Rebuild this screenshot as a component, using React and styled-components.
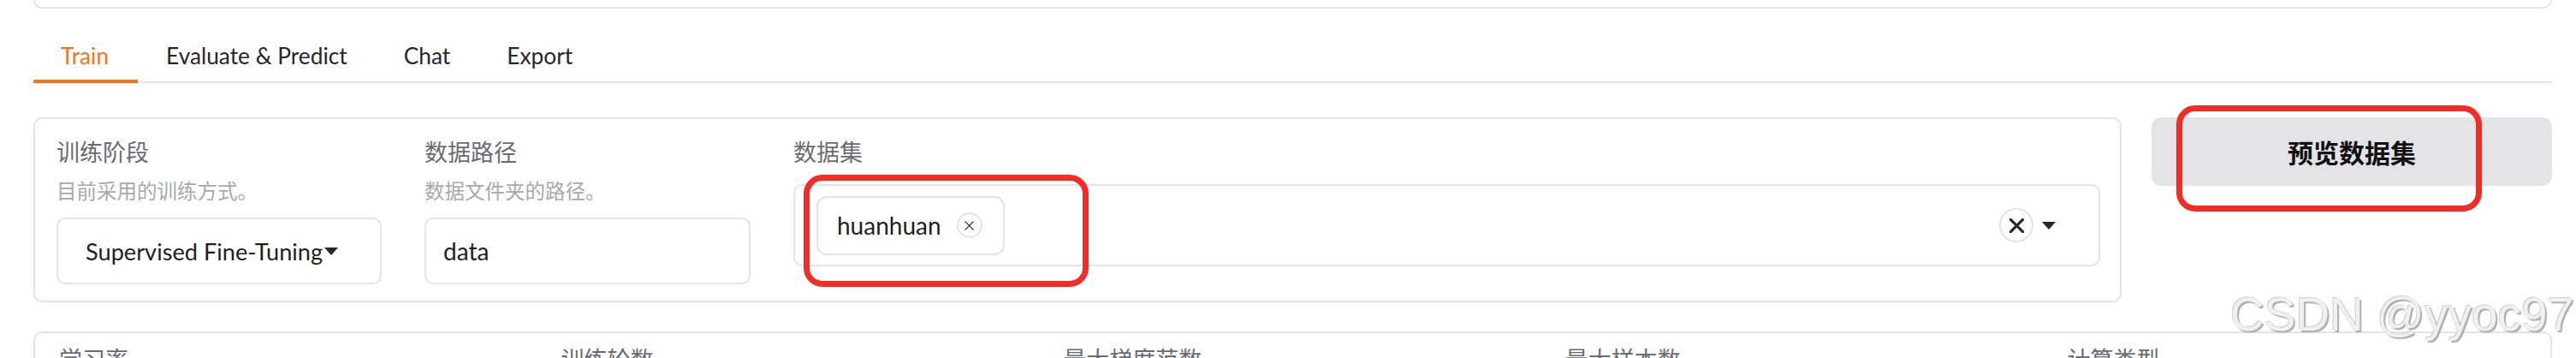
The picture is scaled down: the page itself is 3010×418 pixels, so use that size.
import React from "react";
import styled, { createGlobalStyle } from "styled-components";

const Global = createGlobalStyle`
  html, body { margin: 0; padding: 0; background: #ffffff; }
  body {
    font-family: "Lato", "Noto Sans CJK SC", sans-serif;
    color: #27272a;
  }
  * { box-sizing: border-box; }
`;

const Page = styled.div`
  position: relative;
  padding: 0 28px 0 39px;
  min-height: 700px;
  overflow: hidden;
`;

const TopCard = styled.div`
  height: 10px;
  border: 2px solid #e4e4e7;
  border-top: none;
  border-radius: 0 0 10px 10px;
`;

const TabBar = styled.div`
  margin-top: 25px;
  display: flex;
  border-bottom: 2px solid #e4e4e7;
`;

const Tab = styled.button`
  all: unset;
  padding: 12px ${(p) => (p.$active ? "34px 10px 32px" : "33px 10px")};
  line-height: 36px;
  font-family: "Lato", sans-serif;
  font-size: 26.3px;
  color: ${(p) => (p.$active ? "#f97316" : "#27272a")};
  border-bottom: 4px solid ${(p) => (p.$active ? "#f97316" : "transparent")};
  margin-bottom: -2px;
  cursor: pointer;
`;

const MainRow = styled.div`
  margin-top: 40px;
  display: flex;
  gap: 35px;
  align-items: flex-start;
`;

const Card = styled.div`
  flex: ${(p) => p.$flex || "0 0 2440px"};
  border: 2px solid #e4e4e7;
  border-radius: 10px;
  padding: ${(p) => p.$pad || "20px 23px 19px 25px"};
  display: ${(p) => (p.$grid ? "grid" : "flex")};
  grid-template-columns: repeat(5, 1fr);
  gap: 50px;
  align-items: flex-start;
`;

const Field = styled.div`
  flex: ${(p) => p.$flex || "0 0 auto"};
  width: ${(p) => (p.$w ? `${p.$w}px` : "auto")};
  display: flex;
  flex-direction: column;
`;

const Label = styled.div`
  font-family: "Noto Sans CJK SC", sans-serif;
  font-size: 27px;
  line-height: 36px;
  color: #6b6b73;
`;

const Hint = styled.div`
  margin-top: 12px;
  font-family: "Noto Sans CJK SC", sans-serif;
  font-size: 23.5px;
  line-height: 30px;
  color: #a8a8b0;
`;

const Box = styled.div`
  margin-top: ${(p) => p.$mt || 17}px;
  height: ${(p) => p.$h || 78}px;
  border: 2px solid #e4e4e7;
  border-radius: 10px;
  padding: 0 ${(p) => p.$pr || 20}px 0 ${(p) => p.$pl || 20}px;
  display: flex;
  align-items: center;
  font-family: "Lato", sans-serif;
  font-size: ${(p) => p.$fs || 28}px;
  color: #1f1f23;
  gap: ${(p) => p.$gap || 0}px;
`;

const Chip = styled.div`
  height: 69px;
  border: 2px solid #e4e4e7;
  border-radius: 12px;
  padding: 0 24px 0 22px;
  display: flex;
  align-items: center;
  gap: 18px;
  font-size: 28px;
  color: #1f1f23;
`;

const CircleX = styled.span`
  width: ${(p) => p.$size}px;
  height: ${(p) => p.$size}px;
  border: 2px solid #e4e4e7;
  border-radius: 50%;
  display: inline-flex;
  align-items: center;
  justify-content: center;
  flex: 0 0 auto;
`;

const Spacer = styled.div`
  flex: 1;
`;

const CaretGap = styled.span`
  width: 10px;
`;

const PreviewButton = styled.button`
  all: unset;
  flex: 0 0 468px;
  height: 80px;
  border-radius: 12px;
  background: #e4e4e7;
  display: flex;
  align-items: center;
  justify-content: center;
  font-family: "Noto Sans CJK SC", sans-serif;
  font-weight: 700;
  font-size: 30px;
  color: #111111;
`;

const SecondCard = styled(Card)`
  margin-top: 34px;
`;

const Annotation = styled.div`
  position: absolute;
  border: 7px solid #f32c26;
  border-radius: 22px;
  pointer-events: none;
`;

const Watermark = styled.div`
  position: absolute;
  left: 2606px;
  top: 340px;
  font-family: "Liberation Sans", Arial, sans-serif;
  font-size: 55px;
  line-height: 1;
  white-space: nowrap;
  color: #f0f0f0;
  text-shadow: 2px 2px 1px #adadad, -1px -1px 0 #d0d0d0;
  pointer-events: none;
`;

const Caret = ({ w = 16, h = 9 }) => (
  <svg width={w} height={h} viewBox="0 0 16 9">
    <path d="M0 0 H16 L8 9 Z" fill="#27272a" />
  </svg>
);

const XIcon = ({ s = 12, sw = 1.6 }) => (
  <svg width={s} height={s} viewBox="0 0 12 12">
    <path d="M1 1 L11 11 M11 1 L1 11" stroke="#27272a" strokeWidth={sw} strokeLinecap="round" />
  </svg>
);

const tabs = ["Train", "Evaluate & Predict", "Chat", "Export"];
const bottomFields = ["学习率", "训练轮数", "最大梯度范数", "最大样本数", "计算类型"];

export default function App() {
  return (
    <>
      <Global />
      <Page>
        <TopCard />
        <TabBar>
          {tabs.map((t, i) => (
            <Tab key={t} $active={i === 0}>
              {t}
            </Tab>
          ))}
        </TabBar>
        <MainRow>
          <Card>
            <Field $w={380}>
              <Label>训练阶段</Label>
              <Hint>目前采用的训练方式。</Hint>
              <Box $pl={32} $gap={2} $fs={27.2}>
                Supervised Fine-Tuning
                <Caret />
              </Box>
            </Field>
            <Field $w={381}>
              <Label>数据路径</Label>
              <Hint>数据文件夹的路径。</Hint>
              <Box>data</Box>
            </Field>
            <Field $flex="1 1 auto">
              <Label>数据集</Label>
              <Box $mt={20} $h={96} $pl={25} $pr={50}>
                <Chip>
                  huanhuan
                  <CircleX $size={30}>
                    <XIcon s={11} sw={1.4} />
                  </CircleX>
                </Chip>
                <Spacer />
                <CircleX $size={40}>
                  <XIcon s={17} sw={2.2} />
                </CircleX>
                <CaretGap />
                <Caret />
              </Box>
            </Field>
          </Card>
          <PreviewButton>预览数据集</PreviewButton>
        </MainRow>
        <SecondCard $grid $pad="12px 28px 20px 28px">
          {bottomFields.map((f) => (
            <Field key={f}>
              <Label>{f}</Label>
              <Hint>&nbsp;</Hint>
              <Box>&nbsp;</Box>
            </Field>
          ))}
        </SecondCard>
        <Annotation style={{ left: 939, top: 204, width: 333, height: 131 }} />
        <Annotation style={{ left: 2543, top: 123, width: 357, height: 124 }} />
        <Watermark>CSDN @yyoc97</Watermark>
      </Page>
    </>
  );
}
